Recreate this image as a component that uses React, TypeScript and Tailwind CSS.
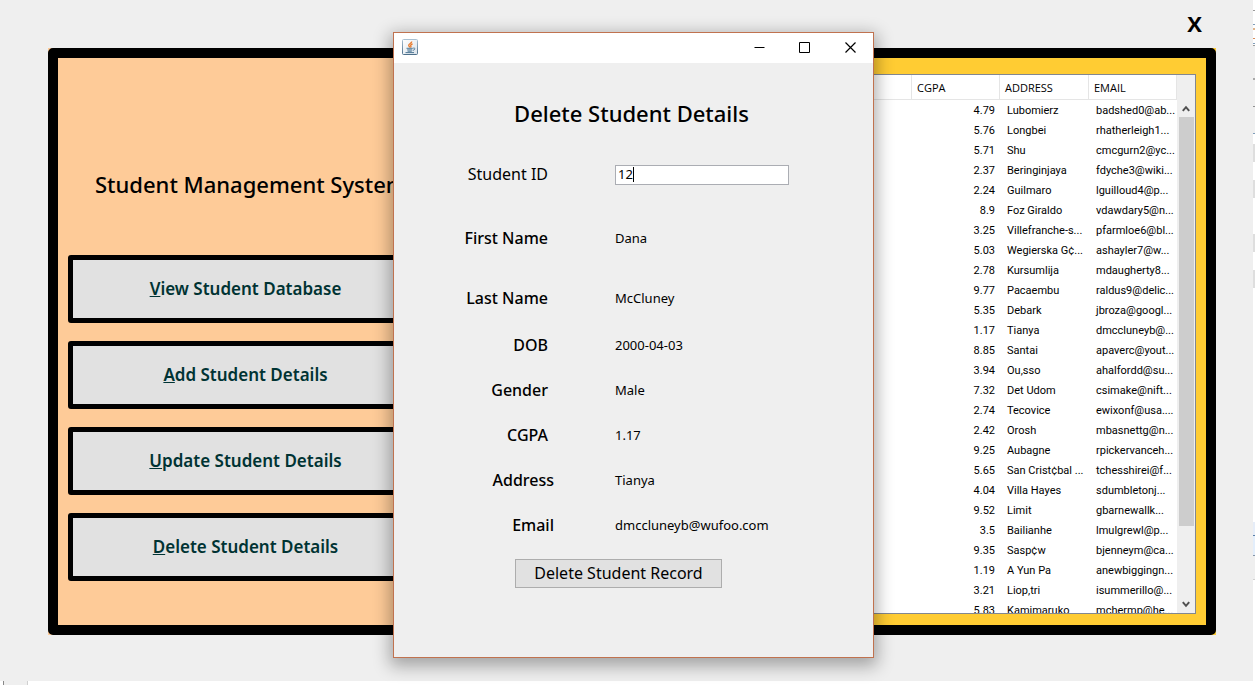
const menu = [
  ["V", "iew Student Database"],
  ["A", "dd Student Details"],
  ["U", "pdate Student Details"],
  ["D", "elete Student Details"],
];

const students = [
  ["4.79", "Lubomierz", "badshed0@ab..."],
  ["5.76", "Longbei", "rhatherleigh1..."],
  ["5.71", "Shu", "cmcgurn2@yc..."],
  ["2.37", "Beringinjaya", "fdyche3@wiki..."],
  ["2.24", "Guilmaro", "lguilloud4@p..."],
  ["8.9", "Foz Giraldo", "vdawdary5@n..."],
  ["3.25", "Villefranche-s...", "pfarmloe6@bl..."],
  ["5.03", "Wegierska G¢...", "ashayler7@w..."],
  ["2.78", "Kursumlija", "mdaugherty8..."],
  ["9.77", "Pacaembu", "raldus9@delic..."],
  ["5.35", "Debark", "jbroza@googl..."],
  ["1.17", "Tianya", "dmccluneyb@..."],
  ["8.85", "Santai", "apaverc@yout..."],
  ["3.94", "Ou,sso", "ahalfordd@su..."],
  ["7.32", "Det Udom", "csimake@nift..."],
  ["2.74", "Tecovice", "ewixonf@usa...."],
  ["2.42", "Orosh", "mbasnettg@n..."],
  ["9.25", "Aubagne", "rpickervanceh..."],
  ["5.65", "San Crist¢bal ...", "tchesshirei@f..."],
  ["4.04", "Villa Hayes", "sdumbletonj..."],
  ["9.52", "Limit", "gbarnewallk..."],
  ["3.5", "Bailianhe", "lmulgrewl@p..."],
  ["9.35", "Sasp¢w", "bjenneym@ca..."],
  ["1.19", "A Yun Pa", "anewbiggingn..."],
  ["3.21", "Liop,tri", "isummerillo@..."],
  ["5.83", "Kamimaruko", "mchermp@he..."],
];

const details = [
  { label: "First Name", value: "Dana", row: "mt-[19px]", pad: "pr-[67px]" },
  { label: "Last Name", value: "McCluney", row: "mt-[15px]", pad: "pr-[67px]" },
  { label: "DOB", value: "2000-04-03", row: "mt-[2px]", pad: "pr-[67px]" },
  { label: "Gender", value: "Male", row: "", pad: "pr-[67px]" },
  { label: "CGPA", value: "1.17", row: "", pad: "pr-[67px]" },
  { label: "Address", value: "Tianya", row: "", pad: "pr-[61px]" },
  { label: "Email", value: "dmccluneyb@wufoo.com", row: "", pad: "pr-[61px]" },
];

function JavaIcon() {
  return (
    <svg className="size-4" viewBox="0 0 16 16" fill="none" aria-hidden="true">
      <defs>
        <linearGradient id="tile" x1="0" y1="0" x2="0" y2="1">
          <stop offset="0" stopColor="#a9c0d2" />
          <stop offset="1" stopColor="#4d6f8a" />
        </linearGradient>
        <linearGradient id="face" x1="0" y1="0" x2="1" y2="1">
          <stop offset="0" stopColor="#ffffff" />
          <stop offset="1" stopColor="#d9e2ea" />
        </linearGradient>
      </defs>
      <rect x="0.5" y="0.5" width="15" height="15" rx="1" fill="url(#face)" stroke="url(#tile)" />
      <path d="M9.8 2.6C9.8 4.4 6.6 4.6 6.7 6.3c0 .9.9 1.300 1 2M10.600 4.800c-1.700.7-2.300 1.400-1.700 2.300.4.6 0 1-.4 1.400" stroke="#e8792b" strokeWidth="1.300" />
      <path d="M4.500 9.300h6.300M5.200 10.900h5M5.600 12.200h4.200M3.500 13.600h8.500M11.200 9.100c2.300-.6 2.300 1.800-.4 2.300" stroke="#4f7896" strokeWidth="1" />
    </svg>
  );
}

function Chevron({ down = false }: { down?: boolean }) {
  return (
    <svg className="w-2 h-[7px]" viewBox="0 0 8 7" fill="none" aria-hidden="true">
      <path d={down ? "M.8 1.200 4 4.800l3.200-3.600" : "M.8 5.800 4 2.200l3.200 3.600"} stroke="#505050" strokeWidth="2" />
    </svg>
  );
}

function Cols() {
  return (
    <colgroup>
      <col />
      <col className="w-[88px]" />
      <col className="w-[89px]" />
      <col className="w-[88px]" />
    </colgroup>
  );
}

function StudentTable() {
  return (
    <div className="flex h-full flex-col border border-[#828790] bg-white text-[11px] text-black">
      <div className="flex min-h-0 flex-1 bg-[#efefef]">
        <div className="min-w-0 flex-1 overflow-hidden bg-white">
          <table className="w-full table-fixed border-separate border-spacing-0">
            <Cols />
            <thead className="font-['Open_Sans',sans-serif]">
              <tr className="h-[25px]">
                <td className="border-r border-b border-[#e5e5e5]" />
                {["CGPA", "ADDRESS", "EMAIL"].map((h) => (
                  <th key={h} scope="col" className="border-r border-b border-[#e5e5e5] p-0 pt-[2px] pl-[5px] text-left font-normal">{h}</th>
                ))}
              </tr>
            </thead>
            <tbody className="font-['Roboto',sans-serif]">
              {students.map(([cgpa, address, email]) => (
                <tr key={email} className="h-5 leading-4 whitespace-nowrap">
                  <td />
                  <td className="p-0 pt-[2px] pr-[5px] text-right">{cgpa}</td>
                  <td className="p-0 pt-[2px] pl-[7px]">{address}</td>
                  <td className="p-0 pt-[2px] pl-[7px]">{email}</td>
                </tr>
              ))}
            </tbody>
          </table>
        </div>
        <div className="flex w-[18px] flex-col items-center pt-[25px]">
          <div className="flex h-[17px] shrink-0 items-center"><Chevron /></div>
          <div className="w-[15px] flex-[410] bg-[#cdcdcd]" />
          <div className="flex-[70]" />
          <div className="flex h-[17px] shrink-0 items-center"><Chevron down /></div>
        </div>
      </div>
    </div>
  );
}

function DeleteDialog() {
  return (
    <section
      role="dialog"
      aria-labelledby="dialog-title"
      className="absolute top-8 left-[393px] h-[626px] w-[481px] border border-[#c0724f] bg-[#efefef] text-black shadow-[0_5px_16px_3px_rgba(0,0,0,0.32)]"
    >
      <div className="flex h-[30px] items-center justify-between bg-white pb-[2px] pl-2">
        <JavaIcon />
        <div className="flex">
          <button aria-label="Minimize" className="flex h-7 w-[45px] items-center justify-center">
            <svg className="size-[11px]" viewBox="0 0 11 11"><path d="M.5 5.500h10" stroke="#000" /></svg>
          </button>
          <button aria-label="Maximize" className="flex h-7 w-[45px] items-center justify-center">
            <svg className="size-[11px]" viewBox="0 0 11 11" fill="none"><path d="M.5.5h10v10h-10z" stroke="#000" /></svg>
          </button>
          <button aria-label="Close" className="flex h-7 w-[46px] items-center justify-center">
            <svg className="size-[11px]" viewBox="0 0 11 11"><path d="M.5.5l10 10M10.500.5l-10 10" stroke="#000" strokeWidth="1.200" /></svg>
          </button>
        </div>
      </div>
      <div className="flex flex-col pt-[35px]">
        <h2 id="dialog-title" className="pr-1 text-center text-[22px] leading-[30px] font-medium">Delete Student Details</h2>
        <div className="mt-6 flex h-[45px] items-center">
          <label htmlFor="student-id" className="w-[221px] pr-[67px] pb-[2px] text-right text-[16px]">Student ID</label>
          <div className="flex h-5 w-[174px] items-center border border-[#abadb3] bg-white pl-[2px]">
            <input id="student-id" defaultValue="12" size={1} className="w-[15px] bg-transparent text-[13px] outline-none" />
            <span className="h-[15px] w-px shrink-0 bg-black" />
          </div>
        </div>
        <dl>
          {details.map((d) => (
            <div key={d.label} className={`flex h-[45px] items-center ${d.row}`}>
              <dt className={`w-[221px] pb-[2px] text-right text-[16px] font-medium ${d.pad}`}>{d.label}</dt>
              <dd className="text-[13px]">{d.value}</dd>
            </div>
          ))}
        </dl>
        <button className="mt-[11px] ml-[121px] h-[29px] w-[207px] border border-[#adadad] bg-[#e1e1e1] pb-[2px] text-[16px]">
          Delete Student Record
        </button>
      </div>
    </section>
  );
}

function WindowEdge() {
  return (
    <div className="flex w-[2px] shrink-0 flex-col bg-white">
      <div className="mt-[10px] h-px bg-[#9a9a9a]" />
      <div className="mt-[13px] h-px bg-[#7f9db9]" />
      <div className="mt-[3px] h-[2px] bg-[#e0b48a]" />
      <div className="mt-2 h-px bg-[#d88c5a]" />
      <div className="mt-1 h-px bg-[#7f9db9]" />
      <div className="mt-px h-px bg-[#9a9a9a]" />
      <div className="h-8 bg-[#efefef]" />
      <div className="h-[2px] bg-[#a8a8a8]" />
      <div className="h-[26px] bg-[#efefef]" />
      <div className="h-px bg-[#909090]" />
      <div className="h-[26px] bg-[#efefef]" />
      <div className="h-px bg-[#7f9db9]" />
      <div className="mt-[10px] h-[18px] bg-[#dedede]" />
      <div className="mt-[18px] h-[18px] bg-[#dedede]" />
      <div className="mt-9 h-[18px] bg-[#dedede]" />
      <div className="mt-[18px] h-[18px] bg-[#dedede]" />
      <div className="mt-[234px] h-[13px] bg-[#e6edf8]" />
      <div className="h-px bg-[#5a7fa8]" />
      <div className="h-[19px] bg-[#e3eefb]" />
      <div className="h-px bg-[#8494a8]" />
      <div className="h-[23px] bg-[#efefef]" />
      <div className="h-px bg-[#d0d0d0]" />
    </div>
  );
}

export default function App() {
  return (
    <div className="relative flex h-screen min-h-[685px] flex-col overflow-hidden bg-white font-['Noto_Sans',sans-serif] text-black">
      <div className="flex min-h-0 flex-1">
        <main className="flex min-w-0 flex-1 flex-col bg-[#efefef] pr-[37px] pb-[46px] pl-12">
          <div className="flex h-12 shrink-0 items-center justify-end pr-[14px] pb-[2px]">
            <button aria-label="Close application" className="font-['Open_Sans',sans-serif] text-[22px] font-bold">X</button>
          </div>
          <div className="flex min-h-0 flex-1">
            <div className="w-[395px] shrink-0 bg-[#fecb98]">
              <nav className="h-full rounded-l-[5px] border-[10px] border-black bg-[#fecb98] px-[10px] pt-[111px]">
                <h1 className="pl-[27px] text-[22px] leading-[30px] font-medium whitespace-nowrap">Student Management System</h1>
                <div className="mt-14 flex flex-col gap-[18px]">
                  {menu.map(([key, rest]) => (
                    <button
                      key={key}
                      className="h-[68px] rounded-[3px] border-[5px] border-black bg-[#e1e1e1] text-[17px] font-semibold text-[#003333]"
                    >
                      <span className="underline">{key}</span>
                      {rest}
                    </button>
                  ))}
                </div>
              </nav>
            </div>
            <div className="min-w-0 flex-1 bg-[#ffcc33]">
              <div className="h-full rounded-r-[5px] border-[10px] border-black bg-[#ffcc33] px-[10px] pt-4 pb-[11px]">
                <StudentTable />
              </div>
            </div>
          </div>
        </main>
        <WindowEdge />
      </div>
      <footer className="flex h-1 shrink-0 bg-white">
        <div className="ml-[3px] h-1 w-[25px] border-x border-l-[#888888] border-r-[#d0d0d0] bg-[#efefef]" />
      </footer>
      <DeleteDialog />
    </div>
  );
}
